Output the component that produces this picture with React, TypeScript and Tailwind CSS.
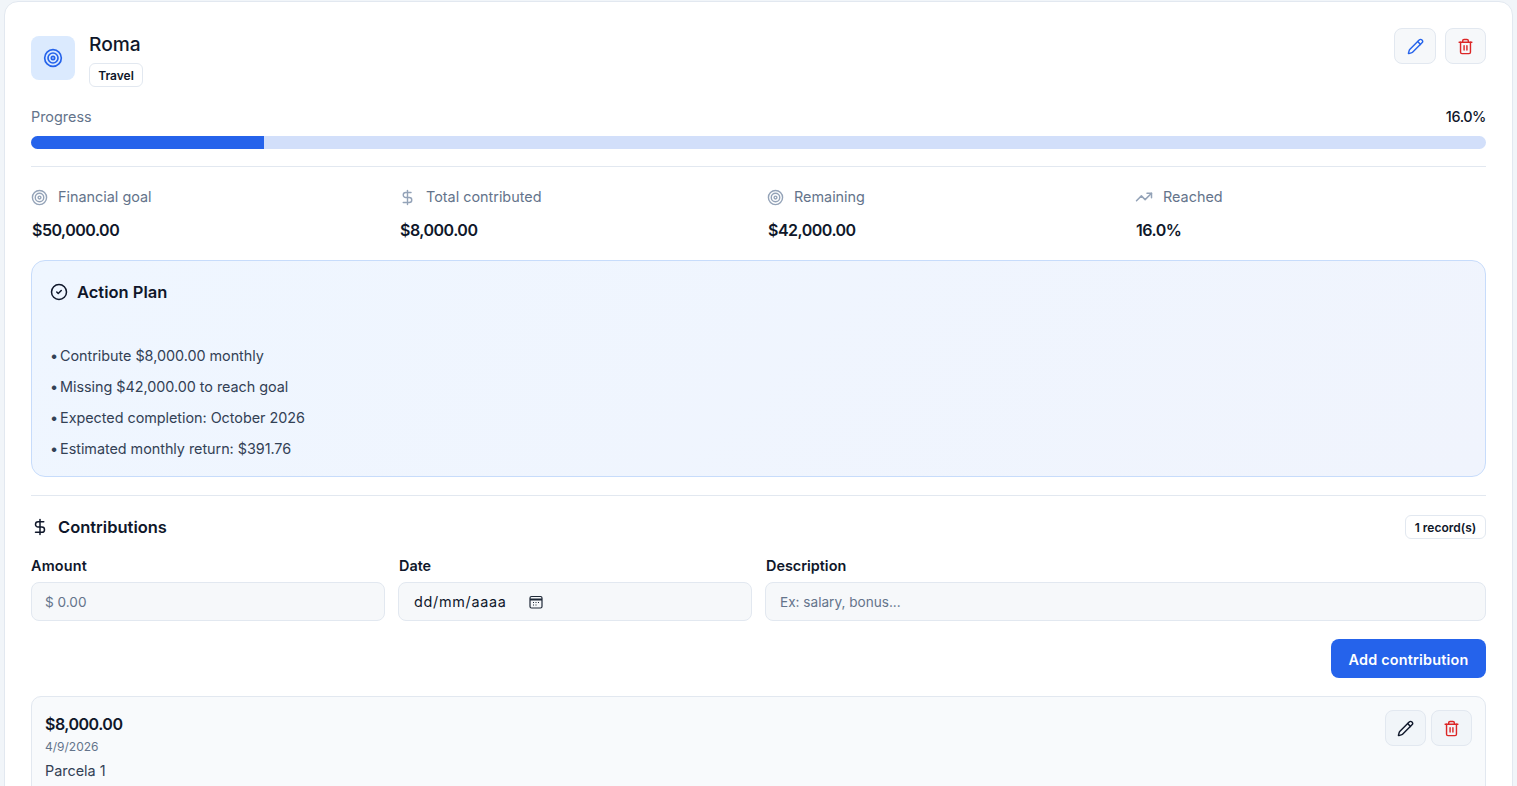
import { Pencil, Trash2, Target, DollarSign, TrendingUp, CircleCheck } from "lucide-react";

function Stat({ icon, label, value }: { icon: React.ReactNode; label: string; value: string }) {
  return (
    <div>
      <div className="flex items-center gap-[10px] h-[20px] text-[14.4px] text-[#64748b]">
        {icon}
        <span>{label}</span>
      </div>
      <div className="mt-[11px] pl-px text-[16px] leading-[24px] font-semibold text-[#0f172a] tracking-[-0.5px]">{value}</div>
    </div>
  );
}

function Bullet({ text }: { text: string }) {
  return (
    <div className="tracking-[-0.04px]">
      <span className="mr-[2px]">•</span>
      {text}
    </div>
  );
}

export default function App() {
  return (
    <div className="h-[786px] overflow-hidden bg-[#f1f5f9] pl-[4px] pr-[4px] pt-[1px] font-['Inter','Noto_Sans',sans-serif]">
      <div className="h-[900px] rounded-[14px] border border-[#e2e8f0] bg-white px-[26px] pt-[26px]">
        <div className="flex items-start justify-between">
          <div className="flex items-start gap-[14px]">
            <div className="mt-[8px] flex h-[44px] w-[44px] items-center justify-center rounded-[8px] bg-[#dbeafe]">
              <Target className="h-[20px] w-[20px] text-[#2563eb]" />
            </div>
            <div>
              <div className="mt-[2px] text-[19.2px] leading-[28px] font-medium text-[#0f172a]">Roma</div>
              <span className="mt-[5px] flex h-[24px] w-[54px] items-center justify-center rounded-[6px] border border-[#e2e8f0] pt-px text-[12px] font-semibold text-[#0f172a]">Travel</span>
            </div>
          </div>
          <div className="flex gap-[9px]">
            <button className="flex h-[36px] w-[42px] items-center justify-center rounded-[8px] border border-[#e2e8f0] bg-[#f6f8fa]">
              <Pencil className="h-[17px] w-[17px] text-[#2563eb]" />
            </button>
            <button className="flex h-[36px] w-[41px] items-center justify-center rounded-[8px] border border-[#e2e8f0] bg-[#f6f8fa]">
              <Trash2 className="h-[17px] w-[17px] text-[#dc2626]" />
            </button>
          </div>
        </div>

        <div className="mt-[20px] flex h-[20px] items-center justify-between text-[14.4px]">
          <span className="text-[#64748b]">Progress</span>
          <span className="font-medium tracking-[-0.4px] text-[#0f172a]">16.0%</span>
        </div>
        <div className="mt-[9px] h-[13px] overflow-hidden rounded-full bg-[#d2dffa]">
          <div className="h-full w-[16%] bg-[#2563eb]" />
        </div>
        <div className="mt-[17px] h-px bg-[#e2e8f0]" />

        <div className="mt-[20px] grid grid-cols-4 gap-[17px]">
          <Stat icon={<Target className="h-[17px] w-[17px] text-[#94a3b8]" />} label="Financial goal" value="$50,000.00" />
          <Stat icon={<DollarSign className="h-[17px] w-[17px] text-[#94a3b8]" />} label="Total contributed" value="$8,000.00" />
          <Stat icon={<Target className="h-[17px] w-[17px] text-[#94a3b8]" />} label="Remaining" value="$42,000.00" />
          <Stat icon={<TrendingUp className="h-[18px] w-[18px] text-[#94a3b8]" />} label="Reached" value="16.0%" />
        </div>

        <div className="mt-[18px] h-[217px] rounded-[14px] border border-[#c7dcfb] bg-[linear-gradient(135deg,#eff6ff,#f0f4fd)] px-[18px] pt-[19px]">
          <div className="flex h-[24px] items-center gap-[9px]">
            <CircleCheck className="h-[18px] w-[18px] text-[#0f172a]" />
            <span className="pt-px text-[16.5px] font-semibold text-[#0f172a]">Action Plan</span>
          </div>
          <div className="mt-[41px] flex flex-col gap-[10px] text-[14.4px] leading-[21px] text-[#334155]">
            <Bullet text="Contribute $8,000.00 monthly" />
            <Bullet text="Missing $42,000.00 to reach goal" />
            <Bullet text="Expected completion: October 2026" />
            <Bullet text="Estimated monthly return: $391.76" />
          </div>
        </div>

        <div className="mt-[18px] h-px bg-[#e2e8f0]" />

        <div className="mt-[19px] flex items-center justify-between">
          <div className="flex items-center gap-[9px]">
            <DollarSign className="h-[18px] w-[18px] text-[#0f172a]" />
            <span className="text-[16.5px] leading-[24px] font-semibold text-[#0f172a]">Contributions</span>
          </div>
          <span className="flex h-[24px] w-[81px] items-center justify-center rounded-[6px] border border-[#e2e8f0] pt-px text-[12px] font-semibold text-[#0f172a]">1 record(s)</span>
        </div>

        <div className="mt-[17px] grid grid-cols-4 gap-[13px]">
          <div>
            <div className="text-[14.4px] leading-[20px] font-semibold tracking-[0.2px] text-[#0f172a]">Amount</div>
            <div className="mt-[6px] flex h-[39px] items-center rounded-[8px] border border-[#e2e8f0] bg-[#f6f8fa] px-[13px] pt-[2px] text-[13.6px] text-[#64748b]">$ 0.00</div>
          </div>
          <div>
            <div className="pl-px text-[14.4px] leading-[20px] font-semibold text-[#0f172a]">Date</div>
            <div className="mt-[6px] flex h-[39px] items-center rounded-[8px] border border-[#e2e8f0] bg-[#f6f8fa] pl-[15px] text-[14.4px] tracking-[0.7px] text-[#0f172a]">
              <span className="w-[115px]">dd/mm/aaaa</span>
              <svg viewBox="0 0 14 14" className="h-[14px] w-[14px]" fill="none" stroke="#1f2937" strokeWidth="1.2">
                <rect x="1" y="1.5" width="12" height="11.5" rx="1.5" />
                <path d="M1 4.5h12" strokeWidth="2" />
                <path d="M4 7.5h1M6.5 7.5h1M9 7.5h1M4 10h1M6.5 10h1" />
              </svg>
            </div>
          </div>
          <div className="col-span-2">
            <div className="pl-px text-[14.4px] leading-[20px] font-semibold text-[#0f172a]">Description</div>
            <div className="mt-[6px] flex h-[39px] items-center rounded-[8px] border border-[#e2e8f0] bg-[#f6f8fa] px-[14px] pt-[2px] text-[13.6px] text-[#64748b]">Ex: salary, bonus...</div>
          </div>
        </div>

        <div className="mt-[18px] flex justify-end">
          <button className="h-[39px] w-[155px] rounded-[8px] bg-[#2563eb] pt-[2px] text-[14.4px] font-semibold tracking-[0.2px] text-white">Add contribution</button>
        </div>

        <div className="mt-[18px] flex h-[120px] items-start justify-between rounded-[10px] border border-[#e2e8f0] bg-[#f8fafc] pl-[13px] pr-[13px] pt-[13px]">
          <div>
            <div className="mt-px text-[16px] leading-[26px] font-semibold text-[#0f172a] tracking-[-0.5px]">$8,000.00</div>
            <div className="mt-[2px] text-[12px] leading-[16px] text-[#64748b]">4/9/2026</div>
            <div className="mt-[6px] text-[14.4px] leading-[20px] text-[#334155]">Parcela 1</div>
          </div>
          <div className="flex gap-[5px]">
            <button className="flex h-[36px] w-[41px] items-center justify-center rounded-[8px] border border-[#e2e8f0] bg-[#f1f5f9]">
              <Pencil className="h-[17px] w-[17px] text-[#0f172a]" />
            </button>
            <button className="flex h-[36px] w-[41px] items-center justify-center rounded-[8px] border border-[#e2e8f0] bg-[#f1f5f9]">
              <Trash2 className="h-[17px] w-[17px] text-[#dc2626]" />
            </button>
          </div>
        </div>
      </div>
    </div>
  );
}
